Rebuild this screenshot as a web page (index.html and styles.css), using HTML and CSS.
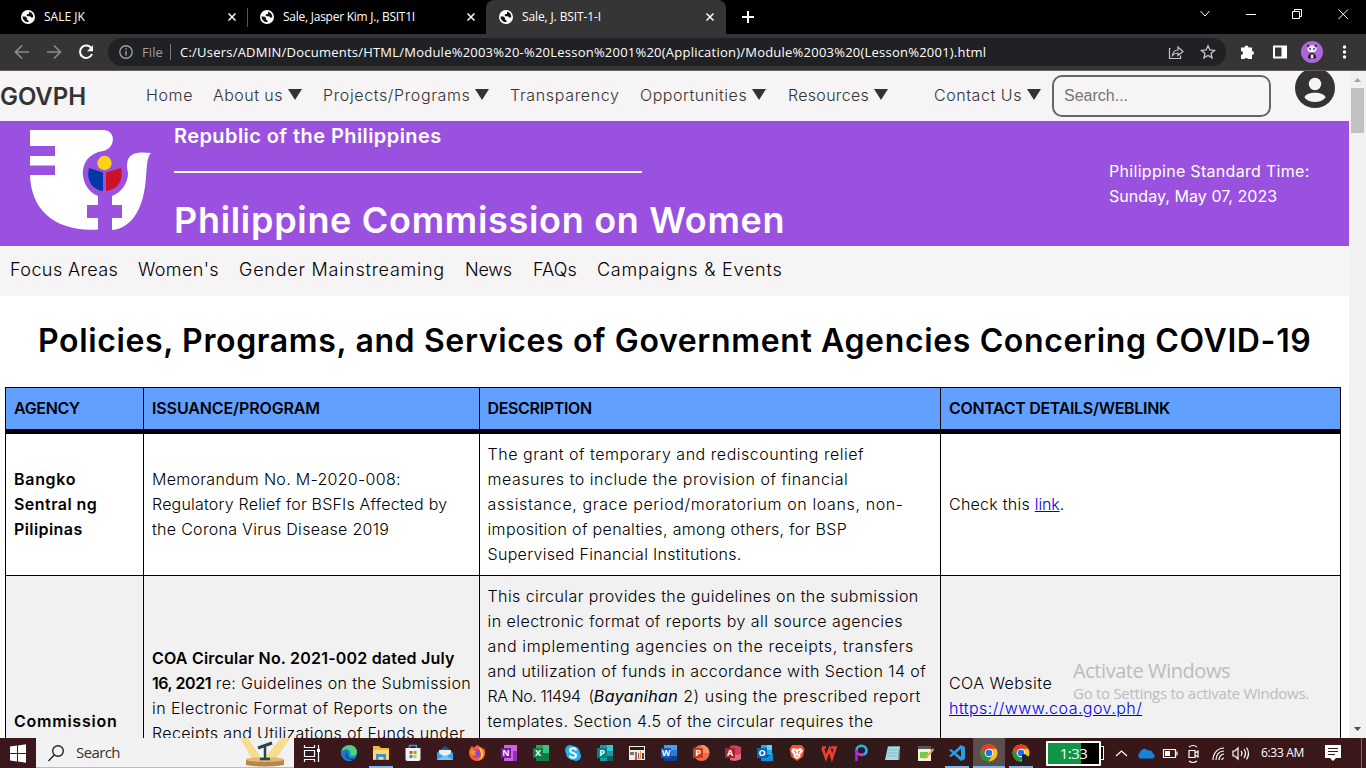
FILE: index.html
```html
<!DOCTYPE html>
<html lang="en">
<head>
<meta charset="utf-8">
<title>Sale, J. BSIT-1-I</title>
<link rel="stylesheet" href="styles.css">
</head>
<body>
<svg width="0" height="0" class="defs">
  <symbol id="globe" viewBox="0 0 14 14"><circle cx="7" cy="7" r="7" fill="#fff"/><path d="M1.500 6.500h3l1.500 1.500v1.500l1.500 1v1.700q-3.500 0-5-2.500-1-1.500-1-3.200zM8 1.700q3 .5 4 3.200l.3 2.300-1.800.5-1.500-1.500H6.500l-1-1 1-1.200H8z" fill="#111"/></symbol>
  <symbol id="cross" viewBox="0 0 8 8"><path d="M.5.5l7 7M7.500.5l-7 7" stroke="#fff" stroke-width="1.500"/></symbol>
  <symbol id="chrome" viewBox="0 0 20 20"><circle cx="10" cy="10" r="8.500" fill="#fbc116"/><path d="M2.600 5.800A8.500 8.500 0 0 1 17.400 5.800H10L6.400 12z" fill="#e33b2e"/><path d="M2.600 5.800A8.500 8.500 0 0 0 9.500 18.500L13.600 12 6.400 12z" fill="#229342"/><circle cx="10" cy="10" r="4.300" fill="#fff"/><circle cx="10" cy="10" r="3.300" fill="#1a73e8"/></symbol>
</svg>

<div class="tabs">
  <div class="tab tab-a"><svg class="fav"><use href="#globe"/></svg><span class="name">SALE JK</span><svg class="x"><use href="#cross"/></svg></div>
  <div class="tab tab-b"><svg class="fav"><use href="#globe"/></svg><span class="name n25">Sale, Jasper Kim J., BSIT1I</span><svg class="x"><use href="#cross"/></svg></div>
  <div class="tab tab-c"><svg class="fav"><use href="#globe"/></svg><span class="name n10">Sale, J. BSIT-1-I</span><svg class="x"><use href="#cross"/></svg></div>
  <svg class="plus" viewBox="0 0 12 12"><path d="M6 0v12M0 6h12" stroke="#fff" stroke-width="2"/></svg>
  <svg class="winctl" width="166" height="34" viewBox="0 0 166 34" fill="none" stroke="#fff"><path d="M.5 11l4.500 5 4.500-5M46 14.500h10"/><path d="M92.500 11.500h7v7h-7zM94.500 11.500v-2h7v7h-2M138.500 9.500l9.500 9.500M148 9.500L138.500 19"/></svg>
</div>

<div class="toolbar">
  <svg width="108" height="36" viewBox="0 0 108 36" fill="none" stroke-width="1.700"><path d="M29 18H16M22 11.500L15.500 18l6.500 6.500M47 18h13M54 11.500l6.500 6.500-6.500 6.500" stroke="#8b8b8b"/><path d="M91.500 14.500A6.200 6.200 0 1 0 92 20" stroke="#fff" stroke-width="2"/><path d="M93 11.200v6h-6z" fill="#fff"/></svg>
  <div class="omni">
    <svg width="14" height="14" viewBox="0 0 14 14" fill="none" stroke="#9aa0a6" stroke-width="1.400"><circle cx="7" cy="7" r="6.200"/><path d="M7 6v4.500M7 3.300v1.500"/></svg>
    <span class="scheme t10">File</span><i class="bar"></i><span class="url">C:/Users/ADMIN/Documents/HTML/Module%2003%20-%20Lesson%2001%20(Application)/Module%2003%20(Lesson%2001).html</span>
    <svg class="share" width="50" height="16" viewBox="0 0 50 16" fill="none" stroke="#c5c7ca" stroke-width="1.200"><path d="M2.500 4.500H1.500v10h11v-3M4.500 11.500c.5-4 2.500-5.500 5.500-5.500V3l5 4.500-5 4V9c-2.500 0-4 .5-5.500 2.500z"/><path d="M40 1.800l1.900 4.200 4.600.4-3.500 3 1.100 4.500-4.100-2.400-4.100 2.400 1.100-4.500-3.500-3 4.600-.4z" stroke-width="1.300"/></svg>
  </div>
  <svg class="ext" width="140" height="36" viewBox="0 0 140 36"><path d="M15 13.500h3.500a2 2 0 1 1 4 0H26V17a2 2 0 1 1 0 4v4h-4a2 2 0 0 0-3.500 0H15V21a2 2 0 0 0 0-4z" fill="#fff"/><path d="M48 12.500h12v11H48z" fill="none" stroke="#fff" stroke-width="2"/><path d="M55.500 12h4.500v12h-4.500z" fill="#fff"/><circle cx="86" cy="18" r="11" fill="#ad65de"/><path d="M82 23.500c0-6 8-6 8 0 0 2-8 2-8 0z" fill="#1d1922"/><path d="M84.700 20.500h2.800v4h-2.800z" fill="#ddd"/><ellipse cx="86" cy="14.800" rx="4.600" ry="3.500" fill="#eee"/><path d="M83 15h1.800M87.200 15H89" stroke="#333" stroke-width="1.500"/><circle cx="82.300" cy="12" r="1.200" fill="#333"/><circle cx="89.700" cy="12" r="1.200" fill="#333"/><g fill="#fff"><circle cx="118.500" cy="13" r="1.700"/><circle cx="118.500" cy="18" r="1.700"/><circle cx="118.500" cy="23" r="1.700"/></g></svg>
</div>

<div class="view">
  <div class="page">
    <nav class="top">
      <strong class="gov">GOVPH</strong>
      <a class="t60">Home</a>
      <a class="t45">About us<i class="tri"></i></a>
      <a class="t60">Projects/Programs<i class="tri"></i></a>
      <a class="t65">Transparency</a>
      <a class="t50">Opportunities<i class="tri"></i></a>
      <a class="t30">Resources<i class="tri"></i></a>
      <a class="t55">Contact Us<i class="tri"></i></a>
      <div class="search">Search...</div>
      <svg class="user" width="40" height="40" viewBox="0 0 40 40"><circle cx="20" cy="20" r="20" fill="#333"/><circle cx="20" cy="16" r="6.200" fill="#f6f4f5"/><path d="M9.500 29.500C10 23 30 23 30.500 29.500 26 35.500 14 35.500 9.500 29.500z" fill="#f6f4f5"/></svg>
    </nav>
    <header class="hero">
      <svg class="logo" width="122" height="102" viewBox="0 0 122 102"><path d="M0 0H74C87 1 85 19 73 21 46 25 48 58 68 66V75H57V88H68V99.500C25 102 1 80 0 45H25V35.500H0V26H25V16H0z" fill="#fff"/><path d="M121 23C117 27 117 35 116 47 114 77 103 98 82 100V88H92V75H82V66C92 62 98 53 98 43 94 24 104 21 121 23z" fill="#fff"/><circle cx="74.500" cy="33" r="7.200" fill="#fcd116"/><path d="M59 38l14 4.500v18.500c-10-1-17-10-14-23z" fill="#0038a8"/><path d="M91 38l-15 4.500v18.500c11-1 18-10 15-23z" fill="#ce1126"/></svg>
      <div class="title"><p class="rep">Republic of the Philippines</p><hr><p class="pcw">Philippine Commission on Women</p></div>
      <div class="time"><span class="t30">Philippine Standard Time:</span><br><span class="t5">Sunday, May 07, 2023</span></div>
    </header>
    <nav class="sub"><a class="t40">Focus Areas</a><a class="t35">Women's</a><a class="t75">Gender Mainstreaming</a><a class="n20">News</a><a class="t10">FAQs</a><a class="t75">Campaigns &amp; Events</a></nav>
    <h1>Policies, Programs, and Services of Government Agencies Concering COVID-19</h1>
    <div class="table">
      <div class="row head"><div class="n35">AGENCY</div><div class="n10">ISSUANCE/PROGRAM</div><div class="n35">DESCRIPTION</div><div class="n30">CONTACT DETAILS/WEBLINK</div></div>
      <div class="row bsp">
        <div><b><span class="t70">Bangko</span><br><span class="t45">Sentral ng</span><br><span class="t40">Pilipinas</span></b></div>
        <div><span class="t30">Memorandum No. M-2020-008:</span><br><span class="t20">Regulatory Relief for BSFIs Affected by</span><br><span class="t30">the Corona Virus Disease 2019</span></div>
        <div><span class="t50">The grant of temporary and rediscounting relief</span><br><span class="t50">measures to include the provision of financial</span><br><span class="t60">assistance, grace period/moratorium on loans, non-</span><br><span class="t35">imposition of penalties, among others, for BSP</span><br><span class="t30">Supervised Financial Institutions.</span></div>
        <div><span class="t25">Check this </span><a class="link n10">link</a>.</div>
      </div>
      <div class="row coa">
        <div class="c1"><b class="t75">Commission</b></div>
        <div class="c2"><b class="t20">COA Circular No. 2021-002 dated July</b><br><b class="n45">16, 2021</b><span class="t35"> re: Guidelines on the Submission</span><br><span class="t40">in Electronic Format of Reports on the</span><br><span class="t35">Receipts and Utilizations of Funds under</span></div>
        <div class="c3"><span class="t40">This circular provides the guidelines on the submission</span><br><span class="t45">in electronic format of reports by all source agencies</span><br><span class="t60">and implementing agencies on the receipts, transfers</span><br><span class="t40">and utilization of funds in accordance with Section 14 of</span><br><span class="n45">RA No. 11494 &nbsp;(</span><em class="t40">Bayanihan</em><span class="t50"> 2) using the prescribed report</span><br><span class="t40">templates. Section 4.5 of the circular requires the</span></div>
        <div class="c4"><span class="t45">COA Website</span><br><a class="link t45">https://www.coa.gov.ph/</a></div>
      </div>
    </div>
  </div>
  <div class="scroll"><svg width="17" height="17" viewBox="0 0 17 17"><path d="M5 11l3.500-4L12 11z" fill="#a3a3a3"/></svg><i class="thumb"></i><svg class="down" width="17" height="17" viewBox="0 0 17 17"><path d="M5 6l3.500 4L12 6z" fill="#505050"/></svg></div>
</div>

<div class="mark"><p class="m1">Activate Windows</p><p class="m2">Go to Settings to activate Windows.</p></div>

<div class="taskbar">
  <svg class="start" width="36" height="30" viewBox="0 0 36 30"><path d="M10 8.500l7-1V15h-7zM18 7.400l8-1.200V15h-8zM10 16h7v7.500l-7-1zM18 16h8v8.800l-8-1.200z" fill="#fff"/></svg>
  <div class="find"><svg width="18" height="18" viewBox="0 0 18 18" fill="none" stroke="#222" stroke-width="1.400"><circle cx="11" cy="7" r="5.300"/><path d="M7.200 11L1.500 17"/></svg><span>Search</span>
    <svg class="mic" width="56" height="30" viewBox="0 0 56 30"><path d="M3 0H11L27 24 18 26zM53 0H44L28 19 36 26z" fill="#f8dc90"/><path d="M9 22h38v5q-19 3-38 0z" fill="#b78747"/><ellipse cx="28" cy="21.500" rx="19" ry="2.500" fill="#dfb777"/><path d="M23 21h10M28 20V9" stroke="#25494a" stroke-width="2.500"/><path d="M21 10L35 5" stroke="#25494a" stroke-width="3"/></svg></div>
  <svg class="view-icon" width="39" height="30" viewBox="0 0 39 30" fill="none" stroke="#fff" stroke-width="1.200"><path d="M10.500 7v2.500h10V7M10.500 12.500h10v6h-10zM10.500 24v-2.500h10V24M24.500 7v17"/><path d="M23 11h3v3h-3z" fill="#fff" stroke="none"/></svg>
  <div class="apps">
    <svg viewBox="0 0 20 20"><circle cx="10" cy="10" r="8" fill="#1689d6"/><path d="M2 9C4 0 18 0 18 9c0 4-5 5-7 3 2-5-5-7-9-3z" fill="#4fd07d"/><path d="M2 9c4-4 8-3 8 0-3 1-2 7 6 6-5 6-14 2-14-6z" fill="#187bc7"/><path d="M8 10c-2 5 3 7 7 6" stroke="#104a8d" stroke-width="1.500" fill="none"/></svg>
    <svg class="on" viewBox="0 0 20 20"><path d="M2 3h6l2 2h8v12H2z" fill="#f4b740"/><path d="M2 7h16v9H2z" fill="#ffd96b"/><path d="M5 17v-6h10v6h-2.500v-3h-5v3z" fill="#3d93d8"/></svg>
    <svg viewBox="0 0 20 20"><path d="M6.500 5V2.500h7V5" fill="none" stroke="#3b9be0" stroke-width="1.500"/><path d="M2.500 5h15v11q0 2-2 2h-11q-2 0-2-2z" fill="#f2f2f2"/><path d="M6.500 8h3v3h-3z" fill="#f25022"/><path d="M10.500 8h3v3h-3z" fill="#7fba00"/><path d="M6.500 12h3v3h-3z" fill="#00a4ef"/><path d="M10.500 12h3v3h-3z" fill="#ffb900"/></svg>
    <svg viewBox="0 0 20 20"><path d="M2 9l8-6 8 6v8H2z" fill="#155b9c"/><path d="M4 7h12v6H4z" fill="#eee"/><path d="M2 9l8 5 8-5v8H2z" fill="#36a6e9"/><path d="M2 17l8-5 8 5z" fill="#75c8f5"/></svg>
    <svg viewBox="0 0 20 20"><path d="M2 10c0-3 1-5 3-7l2 2c1-2 3-3 4-3 1 2 4 2 5 4l1-1c3 6 0 13-7 13-5 0-8-4-8-8z" fill="#ff5b2e"/><path d="M12 4c6 3 6 12-1 13 6-4 2-7 1-13z" fill="#ffd43a"/><circle cx="9.500" cy="10.500" r="4" fill="#8c45d5"/><path d="M3 7c4-1 5 1 7 2-3 0-3 3 0 3-4 2-7-1-7-5z" fill="#ff8b28"/></svg>
    <svg viewBox="0 0 20 20"><path d="M5 2h13v16H5z" fill="#ca64e5"/><path d="M14 8h4v10h-4z" fill="#9332bf"/><path d="M2 5h10v10H2z" fill="#7719aa"/><text x="7" y="13.200">N</text></svg>
    <svg viewBox="0 0 20 20"><path d="M5 2h13v16H5z" fill="#21a366"/><path d="M5 10h13v8H5z" fill="#107c41"/><path d="M12 2h6v8h-6z" fill="#33c481"/><path d="M2 5h10v10H2z" fill="#107c41"/><text x="7" y="13.200">X</text></svg>
    <svg viewBox="0 0 20 20"><circle cx="7" cy="7" r="5" fill="#16aeea"/><circle cx="13" cy="13" r="5" fill="#16aeea"/><circle cx="10" cy="10" r="7" fill="#20b5ed"/><path d="M13 7.500c0-3-6-3-6 0s6 2 6 5-6 3-6 0" fill="none" stroke="#fff" stroke-width="1.900"/></svg>
    <svg viewBox="0 0 20 20"><path d="M5 2h13v16H5z" fill="#1a9ba1"/><path d="M12 2h6v6h-6z" fill="#37c6d0"/><path d="M12 13h6v5h-6z" fill="#0c5c61"/><path d="M2 5h10v10H2z" fill="#038387"/><text x="7" y="13.200">P</text></svg>
    <svg viewBox="0 0 20 20"><path d="M2 3h16v14H2z" fill="#f5eee0"/><path d="M3 4h14v3H3z" fill="#222"/><path d="M3 9h4v3H3zM8 9h2v8H8z" fill="#777"/><path d="M11 10h1v6h-1z" fill="#d54432"/><path d="M13 8h1v8h-1z" fill="#e28f39"/><path d="M15 10h2v6h-2z" fill="#433b72"/></svg>
    <svg viewBox="0 0 20 20"><path d="M5 2h13v16H5z" fill="#2b7cd3"/><path d="M5 2h13v5H5z" fill="#41a5ee"/><path d="M5 13h13v5H5z" fill="#103f91"/><path d="M2 5h10v10H2z" fill="#185abd"/><text x="7" y="13.200">W</text></svg>
    <svg viewBox="0 0 20 20"><circle cx="10.500" cy="10" r="8" fill="#ed6c47"/><path d="M10.500 2a8 8 0 0 1 8 8h-8z" fill="#ff8f6b"/><path d="M2 5h10v10H2z" fill="#c43e1c"/><text x="7" y="13.200">P</text></svg>
    <svg viewBox="0 0 20 20"><path d="M7 3q5-2 11 1v12q-5 3-11 1z" fill="#c9405a"/><path d="M7 11q5 2 11 0v5q-5 3-11 1z" fill="#e46b7d"/><path d="M2 5h10v10H2z" fill="#a4262c"/><text x="7" y="13.200">A</text></svg>
    <svg viewBox="0 0 20 20"><path d="M6 2h11v10H6z" fill="#28a8ea"/><path d="M6 10l6 4 6-4v8H6z" fill="#148cd2"/><path d="M12 2h5v5h-5z" fill="#50d9ff"/><path d="M2 5h10v10H2z" fill="#0364b8"/><text x="7" y="13.200">O</text></svg>
    <svg viewBox="0 0 20 20"><path d="M5.500 2h9l3 3.500-1.500 8L10 18l-6-4.500-1.500-8z" fill="#f9502b"/><path d="M6 5l4 1 4-1 2 3-3 4 .5 2-3.500 2-3.500-2 .5-2-3-4z" fill="#fff"/><path d="M7 8l2 1-1 2M13 8l-2 1 1 2M8.500 14l1.500-1.500 1.500 1.500" stroke="#f9502b" fill="none"/></svg>
    <svg viewBox="0 0 20 20"><path d="M3 4.500h4M3.500 5L7 15l3.500-9 2.500 9 3.500-10.500H12" fill="none" stroke="#ef3e2d" stroke-width="2.600"/></svg>
    <svg viewBox="0 0 20 20" fill="none"><path d="M5.500 10V7.500c0-6.500 10-6.500 10 0 0 4-4 5-7 4" stroke="#12bdf3" stroke-width="2.500"/><path d="M5.500 7v11" stroke="#aa23ed" stroke-width="2.500"/><path d="M6 10c2 2 5 2 7 1" stroke="#d12be3" stroke-width="2"/></svg>
    <svg viewBox="0 0 20 20"><path d="M5 3h12l-1 14H2z" fill="#a9d8e6"/><path d="M16 4l1 12-2 1z" fill="#6c8b79"/><path d="M5 3.500h12" stroke="#527a87" stroke-dasharray="1.500 1"/><path d="M5 7h10M5 10h9M4 13h10" stroke="#86b9c8"/></svg>
    <svg viewBox="0 0 20 20"><path d="M3 3h13v15H3z" fill="#f3f3dd"/><path d="M3 3h13v3H3z" fill="#555"/><path d="M5 9h8v6H5z" fill="#77ca50"/><path d="M18 5l-8 9-1 2 3-1 7-8z" fill="#f0af28"/></svg>
    <svg class="on" viewBox="0 0 20 20"><path d="M14 2l4 2v12l-4 2L2 7l2-1 10 8V6L4 14l-2-1z" fill="#249fe8"/></svg>
    <svg class="on active" viewBox="0 0 20 20"><use href="#chrome"/></svg>
    <svg class="on" viewBox="0 0 20 20"><use href="#chrome"/><path d="M11 12q2-2 4 0l3 2v5h-7z" fill="#17232c"/></svg>
  </div>
  <div class="batt"><span>1:33</span></div><i class="nub"></i>
  <svg class="tray" width="152" height="30" viewBox="0 0 152 30" fill="none" stroke="#fff" stroke-width="1.200"><path d="M10 18l5.500-5 5.500 5"/><path d="M34 20.500a3.500 3.500 0 0 1 0-6 4.500 4.500 0 0 1 8-2 4 4 0 0 1 5 3 2.700 2.700 0 0 1 0 5z" fill="#1683dc" stroke="none"/><path d="M57.500 11.500h12v8h-12zM71 13.500v4"/><path d="M59 13h5v5h-5z" fill="#fff" stroke="none"/><path d="M83 12.500h6v7h-6zM89 15l3-2v6l-3-2M83 9q4-3 8 0M83 23q4 3 8 0"/><path d="M107 22c0-7 5-12 11-12M110 22c0-5 3-9 8-9M113 22c0-3 2-6 5-6M116 22q0-2 2-2"/><path d="M127 13h2l3-3v11l-3-3h-2zM135 13q2 2 0 5M138 11q3 4 0 9M140.500 9.500q4 6 0 12"/></svg>
  <span class="clock">6:33 AM</span>
  <svg class="note" width="62" height="30" viewBox="0 0 62 30"><path d="M21 7h16v13h-5l-3 3-3-3h-5z" fill="#fff"/><path d="M24 10.500h10M24 13.500h10M24 16.500h7" stroke="#3a191b"/><path d="M57.500 0v30" stroke="#806669"/></svg>
</div>
</body>
</html>
```
FILE: styles.css
```css
* { box-sizing: border-box; }
body { margin: 0; width: 1366px; height: 768px; overflow: hidden; display: flex; flex-direction: column; background: #fff; font: 300 16px/25px Inter, sans-serif; color: #000; white-space: nowrap; position: relative; }
p, h1 { margin: 0; }
svg { display: block; flex: none; }
.defs { position: absolute; }
b { font-weight: 600; }

/* letter-spacing steps, hundredths of a pixel */
.t5 { letter-spacing: .05px; } .t10 { letter-spacing: .1px; } .t20 { letter-spacing: .2px; }
.t25 { letter-spacing: .26px; } .t30 { letter-spacing: .3px; } .t35 { letter-spacing: .35px; }
.t40 { letter-spacing: .42px; } .t45 { letter-spacing: .46px; } .t50 { letter-spacing: .53px; }
.t55 { letter-spacing: .55px; } .t60 { letter-spacing: .62px; } .t65 { letter-spacing: .66px; }
.t70 { letter-spacing: .7px; } .t75 { letter-spacing: .76px; }
.n10 { letter-spacing: -.12px; } .n20 { letter-spacing: -.2px; } .n25 { letter-spacing: -.25px; }
.n30 { letter-spacing: -.32px; } .n35 { letter-spacing: -.35px; } .n45 { letter-spacing: -.45px; }

.tabs { height: 34px; flex: none; background: #000; display: flex; color: #fff; font: 400 12px/34px "Open Sans", sans-serif; }
.tab { height: 34px; display: flex; align-items: center; }
.tab-a { width: 248px; padding-left: 21px; background: linear-gradient(#555, #555) 247px 8px / 1px 19px no-repeat; }
.tab-b { width: 238px; padding-left: 12px; }
.tab-c { width: 240px; padding-left: 13px; background: #353535; border-radius: 8px 8px 0 0; }
.fav { width: 14px; height: 14px; margin-right: 9px; }
.name { flex: 1; }
.x { width: 8px; height: 8px; }
.tab-a .x { margin-right: 12px; }
.tab-b .x { margin-right: 11px; }
.tab-c .x { margin-right: 12px; }
.plus { width: 12px; height: 12px; margin: 11px 0 0 16px; }
.winctl { margin-left: auto; }

.toolbar { height: 37px; flex: none; background: #353535; border-bottom: 1px solid #635e62; display: flex; }
.omni { width: 1118px; height: 28px; margin-top: 4px; border-radius: 14px; background: #202124; color: #fff; display: flex; align-items: center; padding-left: 11px; font: 400 13px/28px "Open Sans", sans-serif; }
.scheme { color: #9aa0a6; margin-left: 9px; width: 28px; }
.bar { width: 1px; height: 16px; background: #777; margin-right: 9px; }
.url { letter-spacing: .226px; }
.share { margin: 0 8px 0 auto; }

.view { height: 667px; flex: none; display: flex; overflow: hidden; }
.page { width: 1349px; }
.top { height: 50px; background: #f6f4f5; color: #333; display: grid; grid-template-columns: 146px 67px 110px 187px 130px 148px 146px 118px 243px 1fr; align-items: center; }
.top a { display: flex; align-items: center; padding-bottom: 1px; }
.gov { font-size: 24px; font-weight: 600; letter-spacing: -.07px; }
.tri { width: 0; height: 0; margin: -3px 0 0 5px; border: solid transparent; border-width: 11px 7px 0; border-top-color: #333; }
.search { width: 219px; height: 42px; border: 2px solid #666; border-radius: 10px; background: #f6f4f5; color: #757575; font: 400 16px/38px "Liberation Sans", Arial, sans-serif; padding-left: 10px; }
.user { align-self: start; margin-top: -3px; }
.hero { height: 125px; background: #9b51e0; color: #fff; display: flex; padding-left: 30px; }
.logo { margin-top: 9px; }
.title { width: 957px; padding-left: 22px; }
.rep { font-size: 20px; line-height: 30px; font-weight: 600; letter-spacing: .42px; }
hr { width: 468px; height: 2px; border: 0; background: #fff; margin: 20px 0 20px; }
.pcw { font-size: 36px; line-height: 54px; font-weight: 600; letter-spacing: .69px; }
.time { padding-top: 38px; font-weight: 400; }
.sub { height: 50px; background: #f6f4f5; font-size: 18px; line-height: 48px; display: grid; grid-template-columns: 128px 101px 226px 68px 64px 1fr; padding-left: 10px; }
h1 { font-size: 32px; line-height: 48px; font-weight: 600; letter-spacing: .635px; padding: 21px 0 22px 38px; }

.table { width: 1336px; margin-left: 5px; border: solid #000; border-width: 1px 1px 0 0; }
.row { display: grid; grid-template-columns: 138px 336px 461px 400px; }
.row > div { border-left: 1px solid #000; padding-left: 8px; display: block; }
.row > div:nth-child(3) { padding-left: 7.500px; }
.head { height: 46px; background: #62a0ff; border-bottom: 5px solid #000; font-weight: 600; line-height: 41px; }
.bsp { height: 142px; border-bottom: 1px solid #000; align-items: stretch; }
.bsp > div { padding-top: 33px; }
.bsp > div:nth-child(3) { padding-top: 8px; }
.bsp > div:nth-child(4) { padding-top: 58px; }
.coa { height: 315px; background: #f1f1f1; }
.coa .c1 { padding-top: 133px; }
.coa .c2 { padding-top: 70px; }
.coa .c3 { padding-top: 8px; }
.coa .c4 { padding-top: 95px; }
.link { color: #0000ee; text-decoration: underline; }
em { font-weight: 400; }

.scroll { width: 17px; background: #f1f1f1; display: flex; flex-direction: column; }
.thumb { width: 13px; height: 45px; margin-left: 2px; background: #c1c1c1; }
.down { margin-top: auto; }

.mark { position: absolute; left: 1073px; top: 658px; color: #bcbcbc; font-family: "Open Sans", sans-serif; font-weight: 400; }
.m1 { font-size: 20px; line-height: 26px; letter-spacing: -.44px; }
.m2 { font-size: 15px; line-height: 19px; letter-spacing: -.28px; }

.taskbar { height: 30px; flex: none; display: flex; background: linear-gradient(90deg, #3b171b, #3a181b 40%, #2f1a1a 58%, #381718 75%, #3a171a); color: #fff; font-family: "Open Sans", sans-serif; font-weight: 400; }
.find { width: 258px; height: 30px; background: #f2f2f2; border-bottom: 1px solid #bbb; color: #333; display: flex; align-items: center; padding-left: 11px; font-size: 15px; letter-spacing: -.6px; }
.find span { margin-left: 11px; flex: 1; }
.mic { margin-right: 1px; }
.apps { display: flex; width: 713px; flex: none; }
.apps > svg { width: 32px; height: 30px; padding: 5px 6px; }
.apps > svg.on { background: linear-gradient(#76b9ed, #76b9ed) 4px 28px / 24px 2px no-repeat; }
.apps > svg.active { background: linear-gradient(#76b9ed, #76b9ed) 0 28px / 32px 2px no-repeat, #5d4d4c; }
.apps text { font: 700 9px "Open Sans", sans-serif; fill: #fff; text-anchor: middle; }
.batt { width: 55px; height: 25px; margin-top: 3px; border: 2px solid #fff; border-radius: 1px; background: linear-gradient(90deg, #119443 65%, #000 65%); font-size: 15px; line-height: 21px; text-align: center; letter-spacing: -.6px; flex: none; }
.nub { width: 3px; height: 14px; margin-top: 8px; background: #000; border: 1px solid #fff; border-left: 0; flex: none; }
.tray { margin-left: 2px; margin-right: 3px; }
.clock { width: 43px; font-size: 12px; line-height: 30px; letter-spacing: -.32px; flex: none; }
```
